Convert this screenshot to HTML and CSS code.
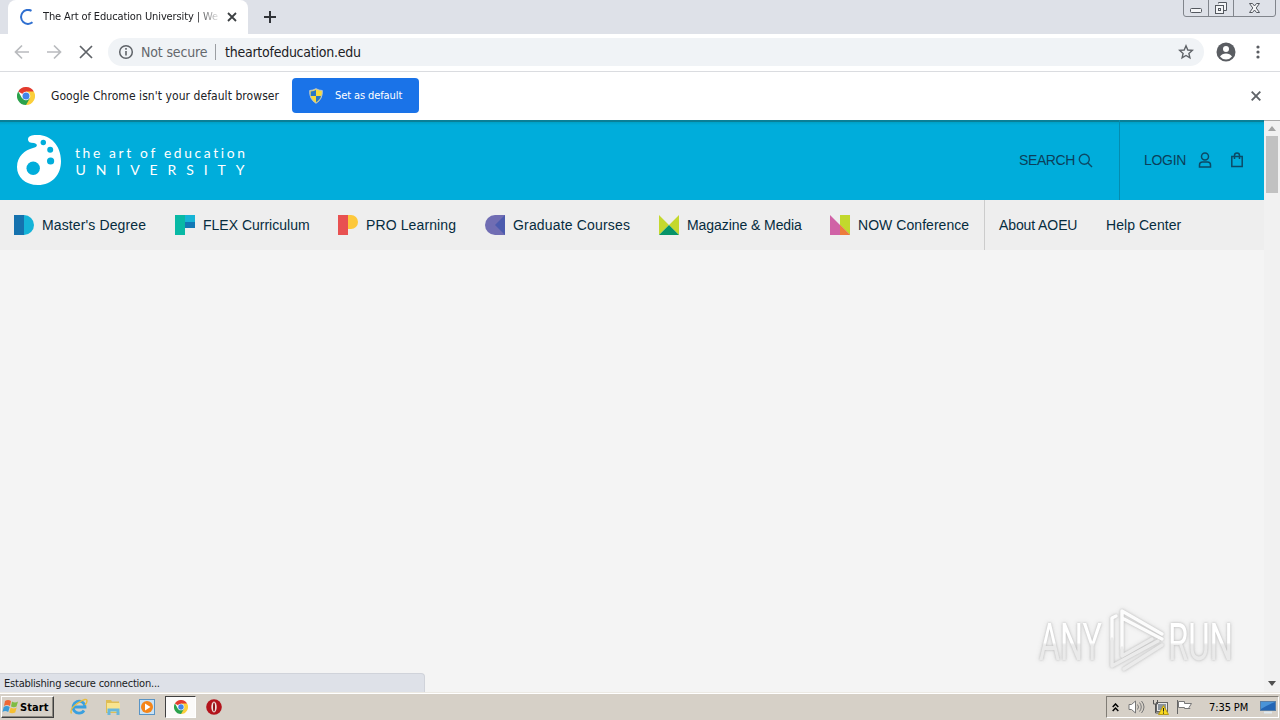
FILE: index.html
```html
<!DOCTYPE html>
<html lang="en">
<head>
<meta charset="utf-8">
<title>The Art of Education University</title>
<link rel="stylesheet" href="styles.css">
</head>
<body>
<svg class="defs" width="0" height="0">
  <symbol id="chrome" viewBox="0 0 18 18">
    <path d="M9 9 1.2 4.5A9 9 0 0 1 16.8 4.5Z" fill="#e33b2e"/>
    <path d="M9 9V4.5h7.8A9 9 0 0 1 9 18Z" fill="#fbcf3b"/>
    <path d="M9 9 5.1 11.2 1.2 4.5A9 9 0 0 0 9 18L12.9 11.2Z" fill="#2ba24c"/>
    <circle cx="9" cy="9" r="4.300" fill="#fff"/><circle cx="9" cy="9" r="3.500" fill="#4285e8"/>
  </symbol>
</svg>
<div class="screen">
  <div class="tabstrip">
    <div class="tab">
      <svg class="spinner" width="16" height="16" viewBox="0 0 16 16"><path d="M11.500 1.800A7 7 0 1 0 12.500 13.300" fill="none" stroke="#2f6fd0" stroke-width="2"/></svg>
      <span class="tab-title">The Art of Education University | We</span>
      <svg width="10" height="10" viewBox="0 0 10 10"><path d="M1 1l8 8M9 1L1 9" stroke="#3c4043" stroke-width="1.800"/></svg>
    </div>
    <svg class="newtab" width="14" height="14" viewBox="0 0 14 14"><path d="M7 1v12M1 7h12" stroke="#303338" stroke-width="2"/></svg>
    <svg class="winbtns" width="94" height="18" viewBox="0 0 94 18">
      <path d="M.5 0V14q0 2.500 2.500 2.500H90q2.500 0 2.500-2.500V0M25.500 0V16M50.500 0V16" fill="none" stroke="#81858c"/>
      <rect x="7.500" y="8.500" width="11" height="4" rx="1" fill="#f4f5f7" stroke="#54585f"/>
      <path d="M35.500 3.500v-1h8v8h-3" fill="#f4f5f7" stroke="#54585f"/>
      <rect x="32.500" y="5.500" width="8" height="8" fill="#f4f5f7" stroke="#54585f"/><rect x="35.500" y="8.500" width="2" height="2" fill="none" stroke="#54585f"/>
      <path d="M66.500 3.500h3l2 2.500 2-2.500h3l-3.300 4.500 3.300 4.500h-3l-2-2.500-2 2.500h-3l3.300-4.500z" fill="#f4f5f7" stroke="#54585f"/>
    </svg>
  </div>
  <div class="toolbar">
    <svg class="navbtns" width="80" height="16" viewBox="0 0 80 16" fill="none" stroke-width="1.700">
      <path d="M15 8H2M8 1.500 1.500 8 8 14.500M33 8H46M40 1.500 46.500 8 40 14.500" stroke="#b9bbbe"/>
      <path d="M66 2l12 12M78 2 66 14" stroke="#5f6368"/>
    </svg>
    <div class="omnibox">
      <svg width="16" height="16" viewBox="0 0 16 16"><circle cx="8" cy="8" r="6.300" fill="none" stroke="#5f6368" stroke-width="1.500"/><path d="M8 7v4.500M8 4v1.700" stroke="#5f6368" stroke-width="1.600"/></svg>
      <span class="notsecure">Not secure</span><i class="sep"></i><span class="url">theartofeducation.edu</span>
      <svg class="star" width="16" height="16" viewBox="0 0 16 16"><path d="M8 1.800 9.800 6l4.500.4-3.400 3 1 4.400L8 11.500l-3.900 2.300 1-4.400-3.400-3L6.200 6z" fill="none" stroke="#5f6368" stroke-width="1.400"/></svg>
    </div>
    <svg class="profile" width="20" height="20" viewBox="0 0 20 20"><circle cx="10" cy="10" r="9.500" fill="#5a5d62"/><circle cx="10" cy="7" r="3" fill="#fff"/><path d="M4 14.500q2-3 6-3t6 3q-2.300 3-6 3t-6-3z" fill="#fff"/></svg>
    <svg width="4" height="14" viewBox="0 0 4 14" fill="#5a5d62"><circle cx="2" cy="2" r="1.600"/><circle cx="2" cy="7" r="1.600"/><circle cx="2" cy="12" r="1.600"/></svg>
  </div>
  <div class="infobar">
    <svg width="18" height="18"><use href="#chrome"/></svg>
    <span class="infotext">Google Chrome isn't your default browser</span>
    <div class="default-btn">
      <svg width="16" height="16" viewBox="0 0 16 16"><path d="M8 .7Q11 2.500 14.300 2.500 15 11 8 15.300 1 11 1.700 2.500 5 2.500 8 .7Z" fill="#f7db3b" stroke="#b9c5cf"/><path d="M8 2v6H2.800L2.700 3.500Q6 3.300 8 2ZM8 8h5Q12 12 8 14.200Z" fill="#2877c5"/></svg>
      <span>Set as default</span>
    </div>
    <svg class="info-close" width="10" height="10" viewBox="0 0 10 10"><path d="M.7.7l8.600 8.600M9.300.7.7 9.300" stroke="#5f6368" stroke-width="1.900"/></svg>
  </div>
  <div class="viewport">
    <div class="page">
      <header class="header">
        <svg class="logo" width="232" height="52" viewBox="0 0 232 52">
          <path d="M20 1C33 0 45 10 45 27 45 41 36 51 22 51 9 51 1 43 1 33 1 22 9 16 17 14 22 13 22 10 18 9 14 9 12 8 12 5.500 12 2 16 1 20 1Z" fill="#fff"/>
          <g fill="#00addb"><circle cx="17.200" cy="34.300" r="6.700"/><circle cx="27.300" cy="8.500" r="2.700"/><circle cx="34.200" cy="15.800" r="3"/><circle cx="34.600" cy="27" r="3.600"/></g>
          <g class="logo-text"><text x="59" y="24" font-size="13.800" textLength="170">the art of education</text><text x="59.500" y="40.500" font-size="14" textLength="169">UNIVERSITY</text></g>
        </svg>
        <div class="search"><span>SEARCH</span><svg width="15" height="15" viewBox="0 0 15 15"><path d="M10 10l4 4" stroke="#0b4a66" stroke-width="1.500"/><circle cx="6.300" cy="6.300" r="5" fill="none" stroke="#0b4a66" stroke-width="1.400"/></svg></div>
        <div class="login"><span>LOGIN</span>
          <svg class="user" width="14" height="16" viewBox="0 0 14 16" fill="none" stroke="#0b4a66" stroke-width="1.500"><circle cx="7" cy="4.500" r="3.500"/><path d="M1.500 15v-2q0-3 3-3h5q3 0 3 3v2z"/></svg>
          <svg width="12" height="16" viewBox="0 0 12 16" fill="none" stroke="#0b4a66" stroke-width="1.500"><path d="M.8 4.500h10.400v10H.8zM3.500 7V3.500q0-2.500 2.500-2.500t2.500 2.500V7"/></svg>
        </div>
      </header>
      <nav class="nav">
        <a class="masters"><svg width="20" height="20"><path d="M10 0a10 10 0 0 1 0 20z" fill="#14b3d8"/><path d="M0 0h10v20H0z" fill="#1572ae"/></svg><span>Master's Degree</span></a>
        <a class="flexc"><svg width="20" height="20"><path d="M0 0h10v20H0z" fill="#08b9a5"/><path d="M10 0h10v7H10z" fill="#16b4d6"/><path d="M10 7h10v6H10z" fill="#1278b5"/></svg><span>FLEX Curriculum</span></a>
        <a class="pro"><svg width="20" height="20"><path d="M13 0a7 7 0 0 1 0 14h-3V0z" fill="#fdc83b"/><path d="M0 0h10v20H0z" fill="#e85151"/></svg><span>PRO Learning</span></a>
        <a class="grad"><svg width="20" height="20"><path d="M20 0H10a10 10 0 0 0 0 20h10z" fill="#706db3"/><path d="M20 0v20L10 10z" fill="#4b5bae"/></svg><span>Graduate Courses</span></a>
        <a class="mag"><svg width="20" height="20"><path d="M0 0l10 10L0 20zM20 0 10 10 20 20z" fill="#c4d82e"/><path d="M10 10 0 20h20z" fill="#069369"/></svg><span>Magazine &amp; Media</span></a>
        <a class="now"><svg width="20" height="20"><path d="M10 0h10v20L10 10z" fill="#c2d82d"/><path d="M0 0l20 20H0z" fill="#d062a6"/><path d="M10 10l10 10H10z" fill="#ed7c3c"/></svg><span>NOW Conference</span></a>
        <a class="about"><span>About AOEU</span></a>
        <a class="help"><span>Help Center</span></a>
      </nav>
    </div>
    <div class="scrollbar">
      <svg width="8" height="5"><path d="M0 5h8L4 0z" fill="#a3a3a3"/></svg>
      <div class="thumb"></div>
      <svg width="8" height="5"><path d="M0 0h8L4 5z" fill="#505050"/></svg>
    </div>
    <div class="status"><span>Establishing secure connection...</span></div>
    <svg class="watermark" width="230" height="74" viewBox="0 0 230 74">
      <defs><linearGradient id="fade" x1="0" y1="0" x2="0" y2="1"><stop offset=".5" stop-color="#fff"/><stop offset=".54" stop-color="#eaeaea"/></linearGradient></defs>
      <text x="9" y="55" font-size="51" textLength="63" lengthAdjust="spacingAndGlyphs" fill="url(#fade)">ANY</text>
      <text x="138" y="55" font-size="51" textLength="65" lengthAdjust="spacingAndGlyphs" fill="url(#fade)">RUN</text>
      <g fill="none" stroke-linejoin="round" stroke-linecap="round" stroke="#fcfcfc" stroke-width="3.500"><path d="M82 34V13L86 11M92 43V6L132 29M132 34 94 14"/><path d="M82 34V61L128 36M92 43V51L122 34M94 64 132 40" stroke="#ebebeb"/></g>
    </svg>
  </div>
  <div class="taskbar">
    <div class="start"><svg width="17" height="16" viewBox="0 0 17 16"><path d="M3 2q3-2 6 0L8 7Q5 5 2 7z" fill="#ef6835"/><path d="M10 2.500q3 2 6 0l-1.500 5Q12 9 9 7.500z" fill="#7fbc43"/><path d="M1.700 8q3-2 6 0l-1.500 5Q3 11 .5 13z" fill="#399bd8"/><path d="M8.700 8.500q3 2 6 0l-1.500 5Q10 15 7.200 13.500z" fill="#f5bf32"/></svg><span>Start</span></div>
    <div class="apps">
      <svg width="18" height="18" viewBox="0 0 18 18"><path d="M14 12.500A6 6 0 1 1 15 9H4" fill="none" stroke="#3aa0df" stroke-width="2.800"/><path d="M1.500 15.500Q-1 11 8 5T17 3Q17 5 15 7" fill="none" stroke="#e9bd3c" stroke-width="1.400"/></svg>
      <svg width="18" height="18" viewBox="0 0 18 18"><path d="M2 2h5l1 1.500h7V15H2z" fill="#dfbd55"/><path d="M3 5h13v9H3z" fill="#f8e48f"/><path d="M3.500 17v-6.500h12V17h-3v-3.500h-6V17z" fill="#68b7dc"/></svg>
      <svg width="18" height="18" viewBox="0 0 18 18"><rect x="1.500" y="1.500" width="15" height="15" fill="#c9e2f5" stroke="#5994c5"/><circle cx="9" cy="9" r="6" fill="#f58518"/><path d="M7 5.500v7L12.500 9z" fill="#fff"/></svg>
      <div class="active"><svg width="14" height="14"><use href="#chrome"/></svg></div>
      <svg width="18" height="18" viewBox="0 0 18 18"><circle cx="9" cy="9" r="7.800" fill="#b3131b"/><ellipse cx="9" cy="9" rx="2.700" ry="5.400" fill="#f0e4e0"/><ellipse cx="9" cy="9" rx="1" ry="4.500" fill="#8e1015"/></svg>
    </div>
    <div class="tray">
      <svg width="7" height="9" viewBox="0 0 7 9"><path d="M.7 4 3.500 1l2.800 3M.7 8l2.800-3 2.800 3" fill="none" stroke="#000" stroke-width="1.500"/></svg>
      <svg class="sound" width="17" height="16" viewBox="0 0 17 16" fill="none" stroke="#777"><path d="M1 5.500h2.500L7.500 2v12L3.500 10.500H1z" fill="#fff"/><path d="M9.500 5.500q2 2.500 0 5M11.500 3.500q3.500 4.500 0 9M13.500 2q5 6 0 12"/></svg>
      <svg width="17" height="16" viewBox="0 0 17 16"><rect x="4.500" y="3.500" width="11" height="9" fill="#e8e8e8" stroke="#666"/><path d="M6 5h8v6H6z" fill="#8b949d"/><path d="M1.500 1v4h4V1M3.500 5v9h5" fill="none" stroke="#555"/><path d="M11.500 6.500 16.500 15.500h-10z" fill="#f9d91f" stroke="#b99b16"/><path d="M11.500 9v3.500M11.500 13.500v1.200" stroke="#222"/></svg>
      <svg width="17" height="16" viewBox="0 0 17 16"><path d="M1.500 1v14" stroke="#666"/><path d="M2.500 2.500h6v2h7l-2.500 4 1 1H8.500v-1h-6z" fill="#fff" stroke="#777"/></svg>
      <span class="clock">7:35 PM</span>
      <svg width="16" height="14" viewBox="0 0 16 14"><rect x=".5" y="1.500" width="15" height="9" fill="#2466b5" stroke="#5b7fa5"/><path d="M1 2h14Q9 4 1 9z" fill="#4a94d8"/><path d="M4 12.500h8" stroke="#dfe9ef" stroke-width="2"/></svg>
    </div>
  </div>
</div>
</body>
</html>
```
FILE: styles.css
```css
* { box-sizing: border-box; }
body { margin: 0; overflow: hidden; }
svg { display: block; flex: none; }
span { white-space: nowrap; }
.defs { position: absolute; }
.screen { width: 1280px; height: 720px; display: flex; flex-direction: column; background: #fff; font: 11px "DejaVu Sans Condensed", "DejaVu Sans", sans-serif; color: #202124; }
.tabstrip { height: 34px; background: #dee1e8; display: flex; padding-left: 8px; flex: none; }
.tab { width: 240px; height: 34px; background: #fff; border-radius: 8px 8px 0 0; display: flex; align-items: center; padding-left: 12px; flex: none; }
.tab-title { width: 175px; margin: 0 13px 0 7px; overflow: hidden; letter-spacing: -0.12px; -webkit-mask-image: linear-gradient(90deg, #000 153px, transparent 178px); mask-image: linear-gradient(90deg, #000 153px, transparent 178px); line-height: 16px; }
.tab-title + svg { margin-left: -4px; }
.newtab { margin: 10px 0 0 15px; }
.winbtns { margin-left: auto; margin-right: 3px; }
.toolbar { height: 38px; flex: none; display: flex; align-items: center; border-bottom: 1px solid #dadce0; padding: 0 20px 2px 14px; }
.omnibox { margin-left: 14px; width: 1096px; height: 28px; border-radius: 14px; background: #f0f3f6; display: flex; align-items: center; padding: 0 10px; font-size: 14px; }
.notsecure { width: 67px; margin-left: 7px; color: #64686d; letter-spacing: -0.15px; }
.sep { width: 1px; height: 16px; background: #9b9ea2; margin: 0 9px 0 7px; }
.url { letter-spacing: -0.25px; }
.star { margin-left: auto; }
.profile { margin: 0 20px 0 12px; }
.infobar { height: 48px; flex: none; display: flex; align-items: center; padding: 0 19px 1px 17px; }
.infotext { font-size: 12px; width: 229px; margin: 0 12px 0 16px; letter-spacing: 0.06px; }
.default-btn { width: 127px; height: 35px; border-radius: 4px; background: #1a73e8; color: #fff; display: flex; align-items: center; gap: 11px; padding-left: 16px; letter-spacing: -0.1px; }
.info-close { margin-left: auto; }
.viewport { position: relative; flex: 1; display: flex; background: #f4f4f4; min-height: 0; }
.page { width: 1264px; }
.header { height: 80px; display: flex; align-items: center; background: linear-gradient(#0a7f97 0, #0a7f97 1.500px, #00a0c5 2px, #00addb 5px); padding-left: 16px; font: 14px "Liberation Sans", Arial, sans-serif; color: #0b3f5a; }
.logo-text { font-family: Lato, sans-serif; fill: #fff; font-variant-ligatures: none; }
.search { width: 100px; margin-left: 771px; display: flex; align-items: center; gap: 3px; letter-spacing: -0.4px; }
.login { height: 80px; flex: 1; border-left: 1px solid #058caf; display: flex; align-items: center; padding-left: 24px; letter-spacing: -0.3px; }
.login .user { margin: 0 19px 0 12px; }
.nav { height: 50px; display: flex; align-items: center; background: #eee; padding-left: 14px; font: 14px "Liberation Sans", Arial, sans-serif; color: #062c3e; }
.nav a { display: flex; align-items: center; gap: 8px; flex: none; height: 50px; }
.masters { width: 161px; letter-spacing: 0.12px; }
.flexc { width: 163px; }
.pro { width: 147px; letter-spacing: 0.12px; }
.grad { width: 174px; letter-spacing: 0.17px; }
.mag { width: 171px; letter-spacing: -0.07px; }
.now { width: 154px; letter-spacing: 0.05px; }
.about { width: 122px; border-left: 1px solid #ccc; padding-left: 14px; letter-spacing: -0.1px; }
.help { letter-spacing: 0.05px; }
.scrollbar { width: 16px; background: #f1f1f1; display: flex; flex-direction: column; align-items: center; padding: 5px 0 6px; border-top: 1px solid #aaa; }
.thumb { width: 12px; height: 57px; background: #c1c1c1; margin: 5px 0 auto; }
.status { position: absolute; left: 0; bottom: 0; width: 425px; height: 19px; background: #dee1e8; border: 1px solid #d0d3da; border-left: 0; border-bottom: 0; border-radius: 0 4px 0 0; padding-left: 4px; line-height: 19px; letter-spacing: -0.22px; }
.watermark { position: absolute; right: 20px; bottom: 13px; font-family: Roboto, sans-serif; filter: drop-shadow(0 0 1px #bbb) drop-shadow(0 0 2px #ddd); }
.taskbar { height: 28px; flex: none; display: flex; align-items: center; background: #d6d0c7; border-top: 1px solid #ece9e3; box-shadow: inset 0 1px #fff; padding: 1px 1px 0; color: #000; }
.start { width: 53px; height: 22px; display: flex; align-items: center; gap: 1px; border: 1px solid; border-color: #fff #404040 #404040 #fff; box-shadow: inset -1px -1px #8c8880; font-weight: bold; letter-spacing: 0.1px; }
.apps { display: flex; align-items: center; margin-left: 16px; gap: 16px; }
.active { width: 31px; height: 22px; border: 1px solid; border-color: #404040 #fff #fff #404040; background: #fbfaf9; display: flex; align-items: center; justify-content: center; margin: 0 -7px; }
.tray { margin-left: auto; width: 173px; height: 22px; border: 1px solid; border-color: #807c75 #fff #fff #807c75; display: flex; align-items: center; gap: 7px; padding-left: 5px; }
.sound { margin-left: 2px; }
.clock { width: 42px; margin-left: 9px; margin-right: 2px; letter-spacing: -0.1px; }
```
